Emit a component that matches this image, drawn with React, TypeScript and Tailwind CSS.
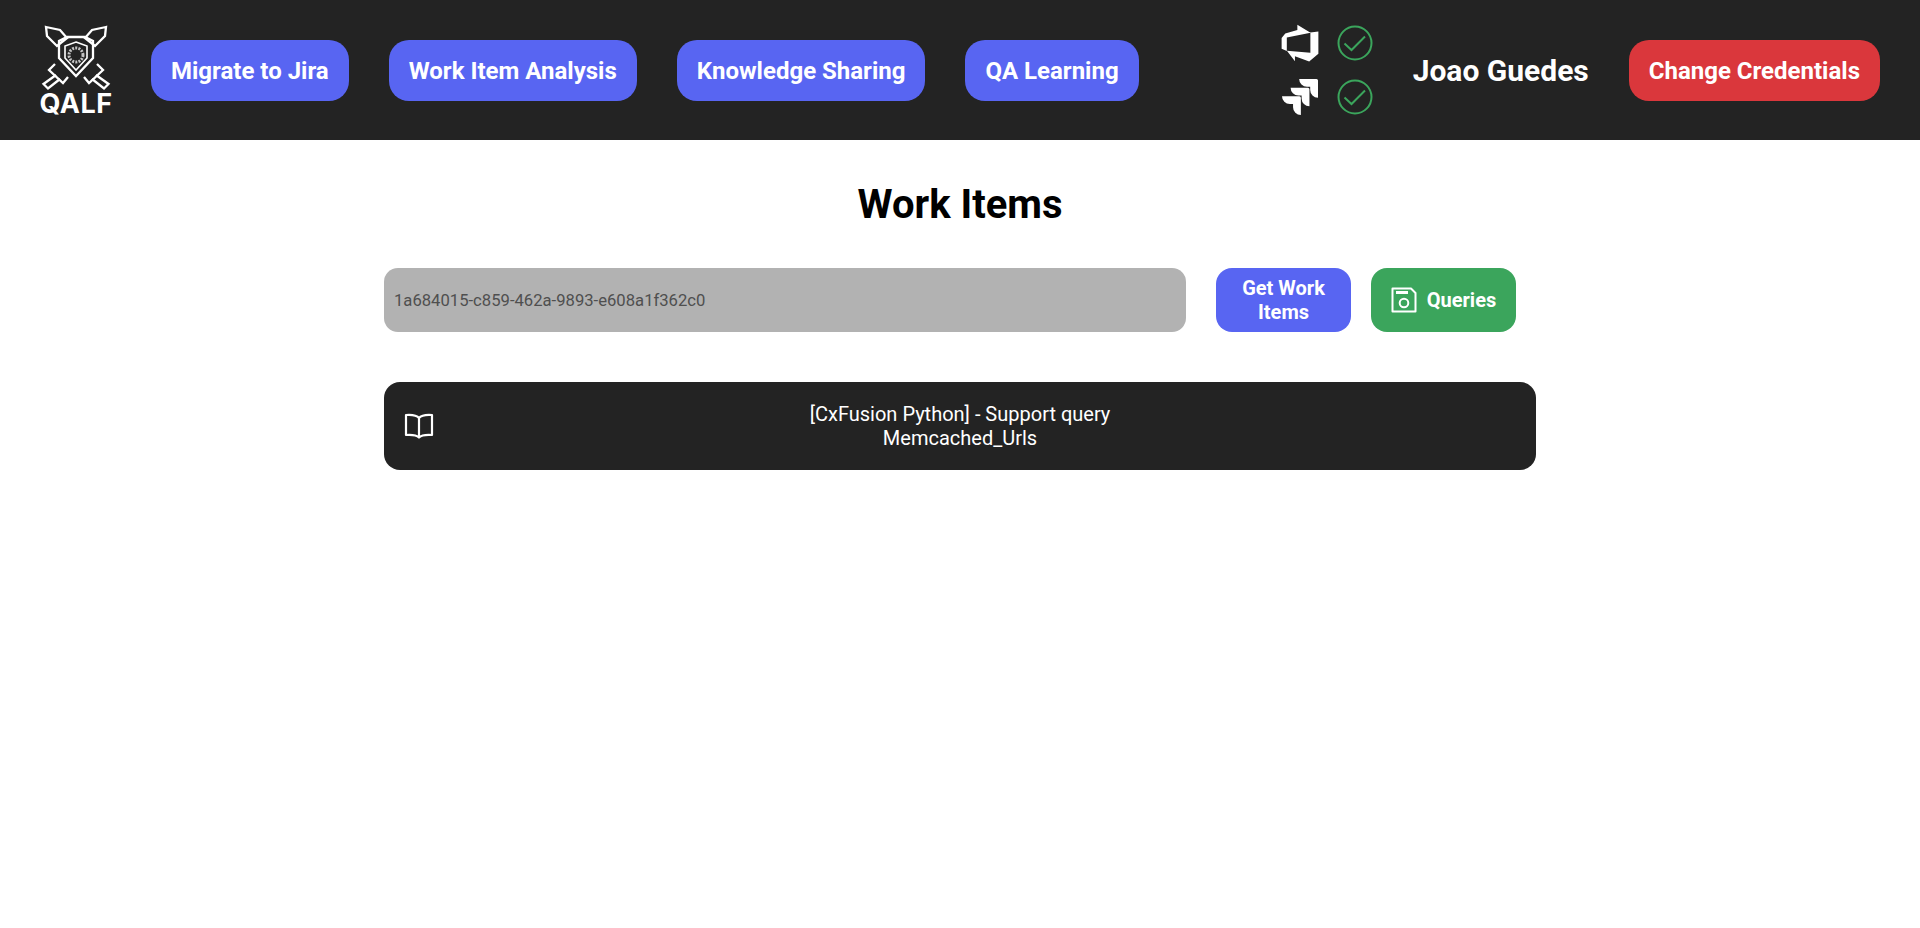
import { SiJira } from "react-icons/si";
import { VscAzureDevops } from "react-icons/vsc";

const navItems = ["Migrate to Jira", "Work Item Analysis", "Knowledge Sharing", "QA Learning"];

function Logo() {
  return (
    <div className="flex flex-col items-center w-[72px]">
      <svg width="72" height="68" viewBox="0 0 72 68" fill="none" stroke="white" strokeWidth="2.3" strokeLinejoin="miter">
        <path d="M6 4 L20 7 L27 15 L17 23 L7 13 Z" />
        <path d="M66 4 L52 7 L45 15 L55 23 L65 13 Z" />
        <path d="M27 14 H45 L53 18 V35 L36 53 L19 35 V18 Z" />
        <path d="M36 19 L47 23 V35 L36 47 L25 35 V23 Z" strokeWidth="1.6" />
        <circle cx="36" cy="32" r="7" stroke="#c4c4c4" strokeWidth="3" strokeDasharray="2 1.2" />
        <path d="M15 41 L9 47 L23 60 L28 54" />
        <path d="M57 41 L63 47 L49 60 L44 54" />
        <path d="M16 52 L3.5 61 L8 65.5 L20 56" />
        <path d="M56 52 L68.5 61 L64 65.5 L52 56" />
      </svg>
      <span className="text-[27px] leading-[26px] tracking-[0.5px] font-bold text-white font-['Inter',sans-serif]">QALF</span>
    </div>
  );
}

function CheckCircle() {
  return (
    <svg width="36" height="36" viewBox="0 0 36 36" fill="none" stroke="#3ba55c" strokeWidth="2">
      <circle cx="18" cy="18" r="16.5" />
      <path d="M7.5 18.5 L14.5 25 L28 11.5" />
    </svg>
  );
}

function SaveIcon() {
  return (
    <svg width="26" height="26" viewBox="0 0 26 26" fill="none" stroke="white" strokeWidth="2" className="shrink-0">
      <path d="M1.5 1.5 H20 L24.5 6 V24.5 H1.5 Z" strokeLinejoin="round" />
      <path d="M5 5.5 H17" strokeWidth="3" />
      <circle cx="13" cy="16" r="4.3" />
    </svg>
  );
}

function BookIcon() {
  return (
    <svg width="30" height="26" viewBox="0 0 30 26" fill="none" stroke="white" strokeWidth="2.2" strokeLinejoin="round" className="shrink-0">
      <path d="M15 5 C13 2.5 9 1.5 2 2 V22 C9 21.5 13 22.5 15 24.5 C17 22.5 21 21.5 28 22 V2 C21 1.5 17 2.5 15 5 V24" />
    </svg>
  );
}

export default function App() {
  return (
    <div className="min-h-[928px] bg-white font-['Roboto',sans-serif]">
      <header className="h-[140px] bg-[#232323] flex items-center pl-10 pr-10">
        <Logo />
        <nav className="flex gap-10 ml-[39px]">
          {navItems.map((item) => (
            <button key={item} className="bg-[#5865f2] text-white text-2xl font-bold px-5 pt-[1px] h-[61px] rounded-[20px]">
              {item}
            </button>
          ))}
        </nav>
        <div className="ml-auto flex items-center">
          <div className="grid grid-cols-[36px_36px] gap-x-[19px] gap-y-[18px] items-center justify-items-center">
            <VscAzureDevops size={42} color="white" className="-m-[3px]" />
            <CheckCircle />
            <SiJira size={36} color="white" />
            <CheckCircle />
          </div>
          <span className="ml-10 text-[30px] font-bold text-white">Joao Guedes</span>
          <button className="ml-10 bg-[#da373c] text-white text-2xl font-bold px-5 pt-[1px] h-[61px] rounded-[20px]">
            Change Credentials
          </button>
        </div>
      </header>

      <main className="w-[1152px] mx-auto">
        <h1 className="mt-[41px] text-center text-[40px] leading-[48px] font-bold text-black">Work Items</h1>
        <div className="flex items-center mt-[39px]">
          <input
            readOnly
            value="1a684015-c859-462a-9893-e608a1f362c0"
            className="w-[802px] h-[64px] bg-[#b2b2b2] rounded-[14px] px-[10px] text-[16.65px] text-[#4f4f4f] outline-none"
          />
          <button className="ml-[30px] w-[135px] h-[64px] px-4 bg-[#5865f2] text-white text-xl leading-[24px] font-bold rounded-[16px]">
            Get Work Items
          </button>
          <button className="ml-5 w-[145px] h-[64px] bg-[#3ba55c] text-white text-xl font-bold rounded-[16px] flex items-center justify-center gap-[10px]">
            <SaveIcon />
            Queries
          </button>
        </div>
        <div className="mt-[50px] h-[88px] bg-[#232323] rounded-[16px] flex items-center pl-5 pr-[50px] text-white">
          <BookIcon />
          <p className="flex-1 text-center text-xl leading-[24px]">
            [CxFusion Python] - Support query
            <br />
            Memcached_Urls
          </p>
        </div>
      </main>
    </div>
  );
}
